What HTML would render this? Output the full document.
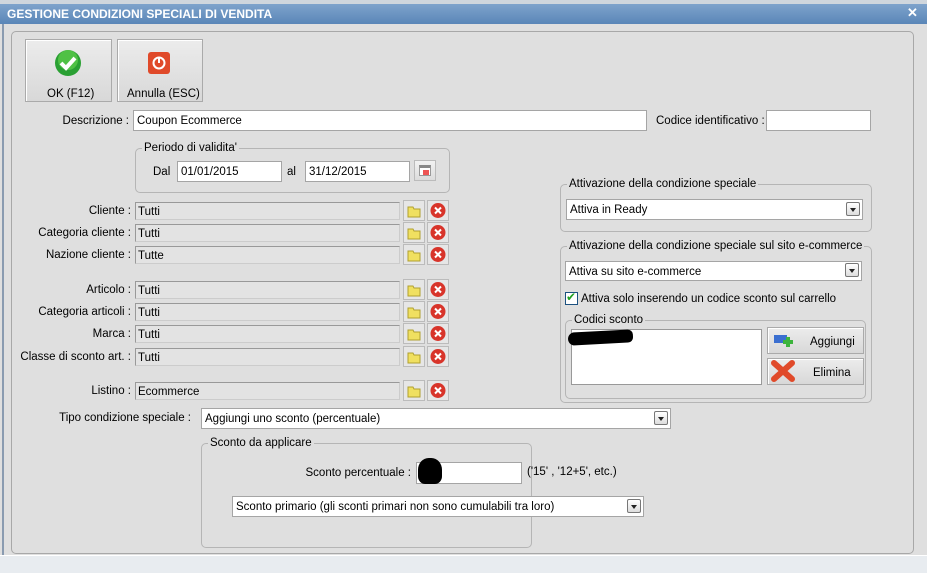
<!DOCTYPE html>
<html><head><meta charset="utf-8"><style>
*{box-sizing:border-box}
body{margin:0;width:927px;height:573px;background:#dfdfdf;font:11.5px "Liberation Sans",sans-serif;color:#000;position:relative;overflow:hidden}
.a{position:absolute}
.t{position:absolute;white-space:nowrap;line-height:14px}
.r{text-align:right}
.in{position:absolute;background:#fff;border:1px solid #a5a5a5;padding:3px 3px 1px;line-height:14px;white-space:nowrap;overflow:hidden}
.ro{background:#e3e3e3;border-color:#999 #ccc #ccc #999;padding:2px 2px 0}
.fs{position:absolute;border:1px solid #b5b5b5;border-radius:5px}
.lg{position:absolute;top:-8px;left:6px;background:#dfdfdf;padding:0 2px;line-height:14px;white-space:nowrap}
.dd{position:absolute;right:2px;top:2px;width:14px;height:14px;border:1px solid #777;background:linear-gradient(#fff,#ddd);border-radius:2px}
.dd:after{content:"";position:absolute;left:3px;top:5px;border:3px solid transparent;border-top:4px solid #222}
.btn{position:absolute;border:1px solid #aaa;background:linear-gradient(#ececec,#d8d8d8);box-shadow:inset 1px 1px #fff}
.ib{position:absolute;width:21px;height:20px;border:1px solid #bbb;background:linear-gradient(#f2f2f2,#dcdcdc)}
</style></head><body>
<div class="a" style="left:0;top:0;width:927px;height:4px;background:#cfd6dd"></div>
<div class="a" style="left:0;top:4px;width:927px;height:20px;background:linear-gradient(#7ea3cc,#5a86b8)"></div>
<div class="t" style="left:7px;top:7px;color:#fff;font-weight:bold;font-size:12px">GESTIONE CONDIZIONI SPECIALI DI VENDITA</div>
<div class="a" style="left:907px;top:7px;width:12px;height:12px;color:#fff;font-weight:bold;font-size:13px;line-height:12px">✕</div>
<div class="a" style="left:2px;top:24px;width:2px;height:549px;background:#8a9bb0"></div>
<div class="a" style="left:0;top:555px;width:927px;height:18px;background:#e8ecf0;border-top:1px solid #fff"></div>
<div class="fs" style="left:11px;top:31px;width:903px;height:523px;border-color:#a8a8a8"></div>

<div class="btn" style="left:25px;top:39px;width:87px;height:63px"></div>
<svg class="a" style="left:54px;top:49px" width="28" height="28"><circle cx="14" cy="14" r="13" fill="#2aa033"/><circle cx="14" cy="11" r="10" fill="#5fcf4d" opacity=".7"/><path d="M7 14l5 5 9-10" stroke="#fff" stroke-width="4" fill="none"/></svg>
<div class="t" style="left:47px;top:87px">OK (F12)</div>
<div class="btn" style="left:117px;top:39px;width:86px;height:63px"></div>
<div class="a" style="left:148px;top:52px;width:22px;height:22px;background:#e04a2a;border-radius:3px"></div>
<svg class="a" style="left:151px;top:55px" width="16" height="16"><circle cx="8" cy="8" r="5.5" stroke="#fff" stroke-width="2" fill="none"/><path d="M8 3v5" stroke="#fff" stroke-width="2"/></svg>
<div class="t" style="left:127px;top:87px">Annulla (ESC)</div>

<div class="t r" style="left:20px;width:109px;top:114px">Descrizione :</div>
<div class="in" style="left:133px;top:110px;width:514px;height:21px">Coupon Ecommerce</div>
<div class="t" style="left:656px;top:114px">Codice identificativo :</div>
<div class="in" style="left:766px;top:110px;width:105px;height:21px"></div>

<div class="fs" style="left:135px;top:148px;width:315px;height:45px"><div class="lg">Periodo di validita'</div></div>
<div class="t" style="left:153px;top:165px">Dal</div>
<div class="in" style="left:177px;top:161px;width:105px;height:21px">01/01/2015</div>
<div class="t" style="left:287px;top:165px">al</div>
<div class="in" style="left:305px;top:161px;width:105px;height:21px">31/12/2015</div>
<div class="ib" style="left:414px;top:160px;width:22px;height:21px"><div class="a" style="left:4px;top:4px;width:12px;height:11px;background:#fff;border:1px solid #999;border-top:3px solid #888"></div><div class="a" style="left:8px;top:9px;width:6px;height:5px;background:#e55"></div></div>

<div class="t r" style="left:10px;width:121px;top:204px">Cliente :</div>
<div class="in ro" style="left:135px;top:202px;width:265px;height:18px">Tutti</div>
<div class="t r" style="left:10px;width:121px;top:226px">Categoria cliente :</div>
<div class="in ro" style="left:135px;top:224px;width:265px;height:18px">Tutti</div>
<div class="t r" style="left:10px;width:121px;top:248px">Nazione cliente :</div>
<div class="in ro" style="left:135px;top:246px;width:265px;height:18px">Tutte</div>
<div class="t r" style="left:10px;width:121px;top:283px">Articolo :</div>
<div class="in ro" style="left:135px;top:281px;width:265px;height:18px">Tutti</div>
<div class="t r" style="left:10px;width:121px;top:305px">Categoria articoli :</div>
<div class="in ro" style="left:135px;top:303px;width:265px;height:18px">Tutti</div>
<div class="t r" style="left:10px;width:121px;top:327px">Marca :</div>
<div class="in ro" style="left:135px;top:325px;width:265px;height:18px">Tutti</div>
<div class="t r" style="left:10px;width:121px;top:350px">Classe di sconto art. :</div>
<div class="in ro" style="left:135px;top:348px;width:265px;height:18px">Tutti</div>
<div class="t r" style="left:10px;width:121px;top:384px">Listino :</div>
<div class="in ro" style="left:135px;top:382px;width:265px;height:18px">Ecommerce</div>

<svg class="a" style="left:403px;top:200px" width="48" height="203">
<defs><g id="f"><rect x="0.5" y="0.5" width="21" height="20" fill="#e6e6e6" stroke="#bbb"/><path d="M5 7h5l1 2h6v8H5z" fill="#f0e060" stroke="#b0a030"/></g>
<g id="x"><rect x="24.5" y="0.5" width="21" height="20" fill="#e6e6e6" stroke="#bbb"/><circle cx="35" cy="10.5" r="7.5" fill="#d8342a"/><path d="M32 7.5l6 6M38 7.5l-6 6" stroke="#fff" stroke-width="2"/></g></defs>
<use href="#f" y="0"/><use href="#x" y="0"/>
<use href="#f" y="22"/><use href="#x" y="22"/>
<use href="#f" y="44"/><use href="#x" y="44"/>
<use href="#f" y="79"/><use href="#x" y="79"/>
<use href="#f" y="101"/><use href="#x" y="101"/>
<use href="#f" y="123"/><use href="#x" y="123"/>
<use href="#f" y="146"/><use href="#x" y="146"/>
<use href="#f" y="180"/><use href="#x" y="180"/>
</svg>

<div class="fs" style="left:560px;top:184px;width:312px;height:48px"><div class="lg">Attivazione della condizione speciale</div></div>
<div class="in" style="left:566px;top:199px;width:297px;height:21px">Attiva in Ready<div class="dd"></div></div>
<div class="fs" style="left:560px;top:246px;width:312px;height:157px"><div class="lg">Attivazione della condizione speciale sul sito e-commerce</div></div>
<div class="in" style="left:565px;top:261px;width:297px;height:20px">Attiva su sito e-commerce<div class="dd" style="top:1px"></div></div>
<div class="a" style="left:565px;top:292px;width:13px;height:13px;border:1px solid #1c5180;background:#fff"></div>
<div class="t" style="left:566px;top:290px;color:#21a121;font-size:12px">✔</div>
<div class="t" style="left:581px;top:292px">Attiva solo inserendo un codice sconto sul carrello</div>
<div class="fs" style="left:565px;top:320px;width:301px;height:79px"><div class="lg">Codici sconto</div></div>
<div class="in" style="left:571px;top:329px;width:191px;height:56px;border-color:#999"></div>
<div class="a" style="left:568px;top:331px;width:65px;height:13px;background:#000;border-radius:10px 8px 8px 10px;transform:rotate(-3deg)"></div>
<div class="btn" style="left:767px;top:327px;width:97px;height:27px"></div>
<svg class="a" style="left:773px;top:332px" width="22" height="18"><rect x="1" y="3" width="13" height="8" fill="#3b6fd0"/><rect x="10" y="8" width="10" height="4" fill="#3cb43c"/><rect x="13" y="5" width="4" height="10" fill="#3cb43c"/></svg>
<div class="t" style="left:810px;top:335px">Aggiungi</div>
<div class="btn" style="left:767px;top:358px;width:97px;height:27px"></div>
<svg class="a" style="left:771px;top:360px" width="24" height="22"><path d="M3 3l18 16M21 3L3 19" stroke="#e04a2a" stroke-width="6" stroke-linecap="round"/></svg>
<div class="t" style="left:813px;top:366px">Elimina</div>

<div class="t r" style="left:20px;width:171px;top:411px">Tipo condizione speciale :</div>
<div class="in" style="left:201px;top:408px;width:470px;height:21px">Aggiungi uno sconto (percentuale)<div class="dd"></div></div>
<div class="fs" style="left:201px;top:443px;width:331px;height:105px"><div class="lg">Sconto da applicare</div></div>
<div class="t r" style="left:280px;width:131px;top:466px">Sconto percentuale :</div>
<div class="in" style="left:416px;top:462px;width:106px;height:22px"></div>
<div class="a" style="left:418px;top:458px;width:24px;height:26px;background:#000;border-radius:45% 45% 30% 30%"></div>
<div class="t" style="left:527px;top:465px">('15' , '12+5', etc.)</div>
<div class="in" style="left:232px;top:496px;width:412px;height:21px">Sconto primario (gli sconti primari non sono cumulabili tra loro)<div class="dd"></div></div>
</body></html>
